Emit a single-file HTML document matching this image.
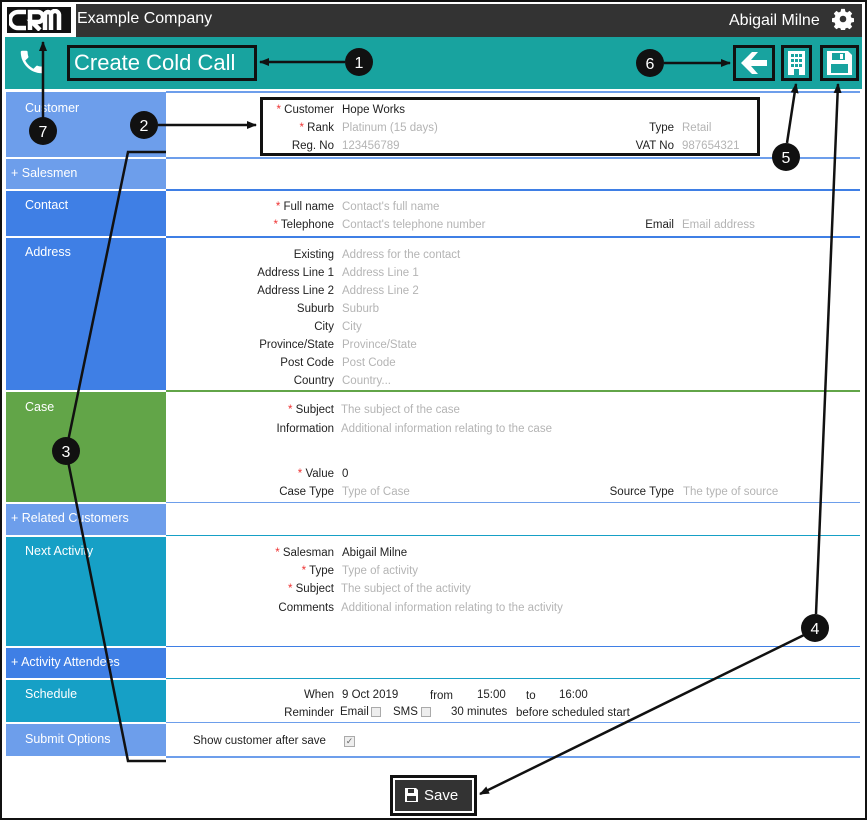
<!DOCTYPE html>
<html><head><meta charset="utf-8">
<style>
*{margin:0;padding:0;box-sizing:border-box}
body{width:867px;height:820px;overflow:hidden;background:#fff;position:relative;font-family:"Liberation Sans",sans-serif;font-size:11.5px;color:#222}
.a{position:absolute;white-space:nowrap}
.lb{position:absolute;left:6px;width:160px;color:#fff;font-size:12.5px;padding-left:19px}
.l{position:absolute;text-align:right;width:200px;white-space:nowrap;margin-top:2px}
.v{position:absolute;white-space:nowrap;color:#b4b4b4;margin-top:2px}
.v.d{color:#222}
.t{margin-top:2px}
.r{color:#e33}
.hl{position:absolute;left:166px;width:694px;height:2px}
</style></head><body>
<div class="a" style="left:0;top:0;width:867px;height:820px;border:2px solid #111"></div>
<div class="a" style="left:5px;top:4px;width:857px;height:33px;background:#333"></div>
<div class="a" style="left:77px;top:10px;color:#fff;font-size:16px">Example Company</div>
<div class="a" style="left:729px;top:12px;color:#fff;font-size:16px">Abigail Milne</div>
<svg class="a" style="left:832px;top:8px" width="22" height="22" viewBox="0 0 24 24"><path fill="#fff" d="M10 1h4l.6 3 2 .9 2.6-1.7 2.8 2.8-1.7 2.6.9 2 3 .6v4l-3 .6-.9 2 1.7 2.6-2.8 2.8-2.6-1.7-2 .9-.6 3h-4l-.6-3-2-.9-2.6 1.7-2.8-2.8 1.7-2.6-.9-2-3-.6v-4l3-.6.9-2-1.7-2.6 2.8-2.8 2.6 1.7 2-.9z"/><circle cx="12" cy="12" r="3.6" fill="#333"/></svg>
<div class="a" style="left:3px;top:3px;width:73px;height:35px;background:#fff"></div>
<div class="a" style="left:5px;top:5px;width:68px;height:30px;background:#111;border:2px solid #fff"></div>
<svg class="a" style="left:9px;top:9px" width="60" height="22" viewBox="0 0 60 22"><g fill="none" stroke="#fff" stroke-width="4.5"><path d="M17 3H9a6 6 0 0 0 0 16h8"/><path d="M21 21V3h8a5 5 0 0 1 0 10h-6l8 8"/><path d="M36 21V6a3 3 0 0 1 6 0v15M42 6a4 4 0 0 1 8 0v15M42 6"/></g></svg>
<div class="a" style="left:5px;top:37px;width:857px;height:52px;background:#18a39f"></div>
<svg class="a" style="left:17px;top:47px" width="30" height="30" viewBox="0 0 24 24"><path fill="#fff" d="M6.6 10.8c1.4 2.8 3.8 5.1 6.6 6.6l2.2-2.2c.3-.3.7-.4 1-.2 1.1.4 2.300.6 3.6.6.6 0 1 .4 1 1V20c0 .6-.4 1-1 1C10.6 21 3 13.4 3 4c0-.6.4-1 1-1h3.5c.6 0 1 .4 1 1 0 1.3.2 2.5.6 3.6.1.3 0 .7-.2 1z"/></svg>
<div class="a" style="left:67px;top:45px;width:190px;height:36px;border:3px solid #111"></div>
<div class="a" style="left:74px;top:50px;color:#fff;font-size:22px">Create Cold Call</div>
<div class="a" style="left:733px;top:45px;width:42px;height:36px;border:3px solid #111"></div>
<svg class="a" style="left:739px;top:50px" width="30" height="26" viewBox="0 0 30 26"><path fill="#fff" d="M2 13L13 2h6l-7 8h16v6H12l7 8h-6z"/></svg>
<div class="a" style="left:781px;top:45px;width:31px;height:36px;border:3px solid #111"></div>
<svg class="a" style="left:787px;top:50px" width="19" height="26" viewBox="0 0 19 26"><rect x="1" y="1" width="17" height="24" fill="#fff"/><g fill="#18a39f"><rect x="4" y="4" width="3" height="3"/><rect x="8" y="4" width="3" height="3"/><rect x="12" y="4" width="3" height="3"/><rect x="4" y="9" width="3" height="3"/><rect x="8" y="9" width="3" height="3"/><rect x="12" y="9" width="3" height="3"/><rect x="4" y="14" width="3" height="3"/><rect x="8" y="14" width="3" height="3"/><rect x="12" y="14" width="3" height="3"/><rect x="7" y="19" width="5" height="6"/></g></svg>
<div class="a" style="left:820px;top:45px;width:39px;height:36px;border:3px solid #111"></div>
<svg class="a" style="left:825px;top:49px" width="29" height="28" viewBox="0 0 29 28"><path fill="#fff" d="M2 2h21l4 4v20H2z"/><rect x="7" y="4" width="13" height="7" fill="#18a39f"/><rect x="15" y="5" width="3" height="5" fill="#fff"/><rect x="6" y="15" width="17" height="9" fill="#18a39f"/></svg>
<div class="lb" style="top:92px;height:65px;background:#6d9eeb;padding-top:9px">Customer</div>
<div class="lb" style="top:159px;height:30px;background:#6d9eeb;padding:7px 0 0 5px">+ Salesmen</div>
<div class="lb" style="top:191px;height:45px;background:#3f7fe5;padding-top:7px">Contact</div>
<div class="lb" style="top:238px;height:152px;background:#3f7fe5;padding-top:7px">Address</div>
<div class="lb" style="top:392px;height:110px;background:#62a548;padding-top:8px">Case</div>
<div class="lb" style="top:504px;height:31px;background:#6d9eeb;padding:7px 0 0 5px">+ Related Customers</div>
<div class="lb" style="top:537px;height:109px;background:#16a0c6;padding-top:7px">Next Activity</div>
<div class="lb" style="top:648px;height:30px;background:#3f7fe5;padding:7px 0 0 5px">+ Activity Attendees</div>
<div class="lb" style="top:680px;height:42px;background:#16a0c6;padding-top:7px">Schedule</div>
<div class="lb" style="top:724px;height:32px;background:#6d9eeb;padding-top:8px">Submit Options</div>
<div class="hl" style="top:91px;background:#6d9eeb"></div>
<div class="hl" style="top:157px;background:#6d9eeb"></div>
<div class="hl" style="top:189px;background:#3f7fe5"></div>
<div class="hl" style="top:236px;background:#3f7fe5"></div>
<div class="hl" style="top:390px;background:#62a548"></div>
<div class="hl" style="top:502px;background:#6d9eeb;height:1px"></div>
<div class="hl" style="top:535px;background:#16a0c6;height:1px"></div>
<div class="hl" style="top:646px;background:#3f7fe5;height:1px"></div>
<div class="hl" style="top:678px;background:#16a0c6;height:1px"></div>
<div class="hl" style="top:722px;background:#6d9eeb;height:1px"></div>
<div class="hl" style="top:756px;background:#6d9eeb"></div>
<div class="l" style="left:134px;top:102px"><span class="r">* </span>Customer</div><div class="v d" style="left:342px;top:102px">Hope Works</div>
<div class="l" style="left:134px;top:120px"><span class="r">* </span>Rank</div><div class="v" style="left:342px;top:120px">Platinum (15 days)</div>
<div class="l" style="left:134px;top:138px">Reg. No</div><div class="v" style="left:342px;top:138px">123456789</div>
<div class="l" style="left:474px;top:120px">Type</div><div class="v" style="left:682px;top:120px">Retail</div>
<div class="l" style="left:474px;top:138px">VAT No</div><div class="v" style="left:682px;top:138px">987654321</div>
<div class="l" style="left:134px;top:199px"><span class="r">* </span>Full name</div><div class="v" style="left:342px;top:199px">Contact's full name</div>
<div class="l" style="left:134px;top:217px"><span class="r">* </span>Telephone</div><div class="v" style="left:342px;top:217px">Contact's telephone number</div>
<div class="l" style="left:474px;top:217px">Email</div><div class="v" style="left:682px;top:217px">Email address</div>
<div class="l" style="left:134px;top:247px">Existing</div><div class="v" style="left:342px;top:247px">Address for the contact</div>
<div class="l" style="left:134px;top:265px">Address Line 1</div><div class="v" style="left:342px;top:265px">Address Line 1</div>
<div class="l" style="left:134px;top:283px">Address Line 2</div><div class="v" style="left:342px;top:283px">Address Line 2</div>
<div class="l" style="left:134px;top:301px">Suburb</div><div class="v" style="left:342px;top:301px">Suburb</div>
<div class="l" style="left:134px;top:319px">City</div><div class="v" style="left:342px;top:319px">City</div>
<div class="l" style="left:134px;top:337px">Province/State</div><div class="v" style="left:342px;top:337px">Province/State</div>
<div class="l" style="left:134px;top:355px">Post Code</div><div class="v" style="left:342px;top:355px">Post Code</div>
<div class="l" style="left:134px;top:373px">Country</div><div class="v" style="left:342px;top:373px">Country...</div>
<div class="l" style="left:134px;top:402px"><span class="r">* </span>Subject</div><div class="v" style="left:341px;top:402px">The subject of the case</div>
<div class="l" style="left:134px;top:421px">Information</div><div class="v" style="left:341px;top:421px">Additional information relating to the case</div>
<div class="l" style="left:134px;top:466px"><span class="r">* </span>Value</div><div class="v d" style="left:342px;top:466px">0</div>
<div class="l" style="left:134px;top:484px">Case Type</div><div class="v" style="left:342px;top:484px">Type of Case</div>
<div class="l" style="left:474px;top:484px">Source Type</div><div class="v" style="left:683px;top:484px">The type of source</div>
<div class="l" style="left:134px;top:545px"><span class="r">* </span>Salesman</div><div class="v d" style="left:342px;top:545px">Abigail Milne</div>
<div class="l" style="left:134px;top:563px"><span class="r">* </span>Type</div><div class="v" style="left:342px;top:563px">Type of activity</div>
<div class="l" style="left:134px;top:581px"><span class="r">* </span>Subject</div><div class="v" style="left:341px;top:581px">The subject of the activity</div>
<div class="l" style="left:134px;top:600px">Comments</div><div class="v" style="left:341px;top:600px">Additional information relating to the activity</div>
<div class="l" style="left:134px;top:687px">When</div>
<div class="a t" style="left:342px;top:687px">9 Oct 2019</div>
<div class="a t" style="left:430px;top:688px">from</div>
<div class="a t" style="left:477px;top:687px">15:00</div>
<div class="a t" style="left:526px;top:688px">to</div>
<div class="a t" style="left:559px;top:687px">16:00</div>
<div class="l" style="left:134px;top:705px">Reminder</div>
<div class="a t" style="left:340px;top:704px">Email</div>
<div class="a" style="left:371px;top:707px;width:10px;height:10px;border:1px solid #aaa;background:#eee"></div>
<div class="a t" style="left:393px;top:704px">SMS</div>
<div class="a" style="left:421px;top:707px;width:10px;height:10px;border:1px solid #aaa;background:#eee"></div>
<div class="a t" style="left:451px;top:704px">30 minutes</div>
<div class="a t" style="left:516px;top:705px">before scheduled start</div>
<div class="a t" style="left:193px;top:733px">Show customer after save</div>
<div class="a" style="left:344px;top:736px;width:11px;height:11px;border:1px solid #aaa;background:#eee;font-size:9px;line-height:9px;text-align:center;color:#666">✓</div>
<div class="a" style="left:390px;top:775px;width:87px;height:41px;border:3px solid #111;background:#fff"></div>
<div class="a" style="left:395px;top:780px;width:77px;height:31px;background:#333"></div>
<svg class="a" style="left:405px;top:788px" width="13" height="14" viewBox="0 0 13 14"><path fill="#fff" d="M0 0h11l2 2v12H0z"/><rect x="3" y="1" width="6" height="4" fill="#333"/><rect x="2" y="8" width="9" height="5" fill="#333"/></svg>
<div class="a" style="left:424px;top:787px;color:#fff;font-size:15px">Save</div>
<div class="a" style="left:260px;top:97px;width:500px;height:59px;border:3px solid #111"></div>
<svg class="a" style="left:0;top:0" width="867" height="820">
<defs><marker id="ar" markerWidth="10" markerHeight="8" refX="9" refY="4" orient="auto" markerUnits="userSpaceOnUse"><path d="M0 0L10 4L0 8z" fill="#111"/></marker></defs>
<g stroke="#111" stroke-width="2.5" fill="none">
<line x1="43" y1="120" x2="43" y2="42" marker-end="url(#ar)"/>
<line x1="345" y1="62" x2="260" y2="62" marker-end="url(#ar)"/>
<line x1="158" y1="125" x2="256" y2="125" marker-end="url(#ar)"/>
<line x1="664" y1="63" x2="730" y2="63" marker-end="url(#ar)"/>
<line x1="787" y1="143" x2="796" y2="84" marker-end="url(#ar)"/>
<line x1="816" y1="614" x2="838" y2="84" marker-end="url(#ar)"/>
<line x1="804" y1="635" x2="480" y2="794" marker-end="url(#ar)"/>
<polyline points="166,152 128,152 66,451 128,761 166,761"/>
</g>
<g fill="#111"><circle cx="43" cy="131" r="14"/><circle cx="359" cy="62" r="14"/><circle cx="144" cy="125" r="14"/><circle cx="650" cy="63" r="14"/><circle cx="786" cy="157" r="14"/><circle cx="815" cy="628" r="14"/><circle cx="66" cy="451" r="14"/></g>
<g fill="#fff" font-family="Liberation Sans, sans-serif" font-size="16" text-anchor="middle"><text x="43" y="137">7</text><text x="359" y="68">1</text><text x="144" y="131">2</text><text x="650" y="69">6</text><text x="786" y="163">5</text><text x="815" y="634">4</text><text x="66" y="457">3</text></g>
</svg>
</body></html>
